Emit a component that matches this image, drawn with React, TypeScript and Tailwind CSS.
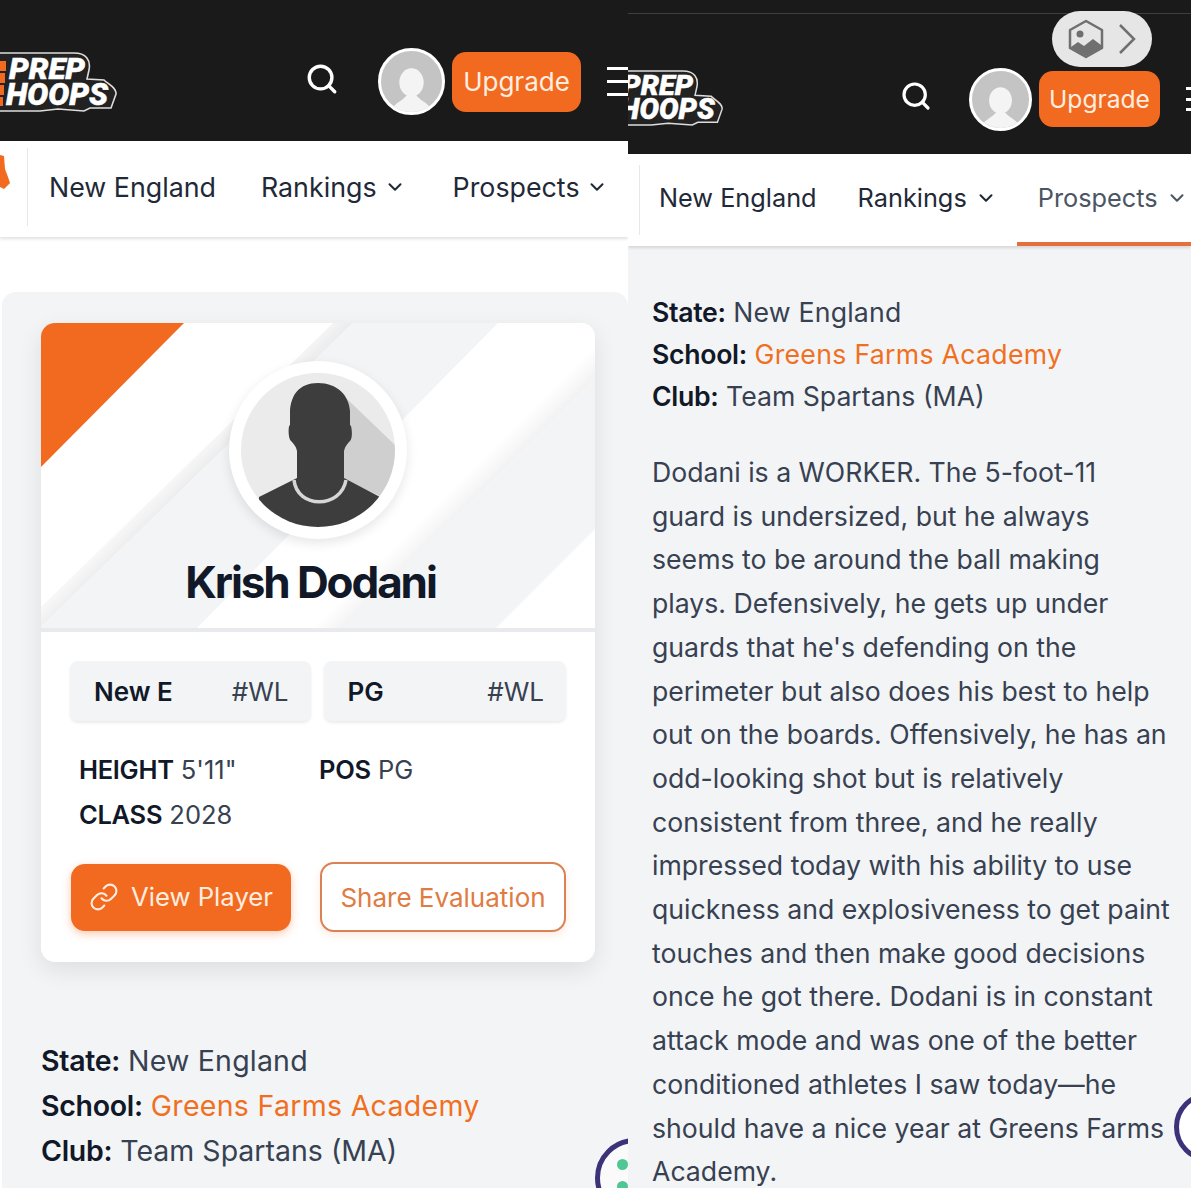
import { Search, ChevronDown, Link } from "lucide-react";

const font = { fontFamily: "Inter, 'Liberation Sans', sans-serif" };

function Logo({ className }: { className: string }) {
  return (
    <svg viewBox="0 0 117 60" className={className}>
      <path
        d="M-6 1 L74 1 C86 1 91 8 89 18 L87 27 L104 28 C108 32 117 36 116 42 L111 56 L90 56 L84 59 L58 57 L40 59 L-6 59 Z"
        fill="#222"
        stroke="#ddd"
        strokeWidth="1.6"
      />
      <rect x="0" y="9" width="6" height="10" fill="#f26a1f" />
      <rect x="0" y="21" width="5" height="10" fill="#f26a1f" />
      <rect x="0" y="33" width="4" height="10" fill="#f26a1f" />
      <rect x="0" y="45" width="3" height="9" fill="#f26a1f" />
      <text x="9" y="27" fontFamily="Roboto, Inter, sans-serif" fontWeight="900" fontStyle="italic" fontSize="30" fill="#fff" stroke="#fff" strokeWidth="0.5" textLength="76" lengthAdjust="spacingAndGlyphs">PREP</text>
      <text x="6" y="53" fontFamily="Roboto, Inter, sans-serif" fontWeight="900" fontStyle="italic" fontSize="31" fill="#fff" stroke="#fff" strokeWidth="0.5" textLength="102" lengthAdjust="spacingAndGlyphs">HOOPS</text>
    </svg>
  );
}

function SmallAvatar({ className, ring }: { className: string; ring: string }) {
  return (
    <div className={`${className} ${ring} shrink-0 rounded-full border-white bg-[#c4c4c4] overflow-hidden`}>
      <svg viewBox="0 0 60 60" className="w-full h-full">
        <ellipse cx="30" cy="31" rx="12" ry="14" fill="#f4f4f4" />
        <path d="M10 60 C11 52 20 50 25 44 L35 44 C40 50 49 52 50 60 Z" fill="#f4f4f4" />
      </svg>
    </div>
  );
}

function Hamburger({ className }: { className: string }) {
  return (
    <div className={`${className} flex flex-col justify-between shrink-0`}>
      <div className="h-[3px] bg-white" />
      <div className="h-[3px] bg-white" />
      <div className="h-[3px] bg-white" />
    </div>
  );
}

function Info({ className }: { className: string }) {
  return (
    <div className={className}>
      <p><b className="font-semibold text-[#111827] tracking-[-0.3px]">State:</b> <span className="tracking-[0.2px]">New England</span></p>
      <p><b className="font-semibold text-[#111827] tracking-[-0.3px]">School:</b> <span className="text-[#f0701f] tracking-[0.3px]">Greens Farms Academy</span></p>
      <p><b className="font-semibold text-[#111827] tracking-[-0.3px]">Club:</b> Team Spartans (MA)</p>
    </div>
  );
}

function CardHeader() {
  return (
    <div className="relative h-[305px] overflow-hidden bg-white flex flex-col items-center">
      <svg viewBox="0 0 554 305" className="absolute inset-0 w-[554px] h-[305px]">
        <defs>
          <linearGradient id="sh1" gradientUnits="userSpaceOnUse" x1="156" y1="152" x2="136" y2="132">
            <stop offset="0" stopColor="#000" stopOpacity="0.07" />
            <stop offset="1" stopColor="#000" stopOpacity="0" />
          </linearGradient>
          <linearGradient id="sh2" gradientUnits="userSpaceOnUse" x1="428" y1="180" x2="412" y2="164">
            <stop offset="0" stopColor="#000" stopOpacity="0.05" />
            <stop offset="1" stopColor="#000" stopOpacity="0" />
          </linearGradient>
        </defs>
        <polygon points="312,0 292,0 0,284 0,304" fill="url(#sh1)" />
        <polygon points="554,56 554,24 272,305 304,305" fill="url(#sh2)" />
        <polygon points="312,0 457,0 156,305 0,305 0,304" fill="#f3f4f6" />
        <polygon points="554,56 554,206 455,305 304,305" fill="#f3f4f6" />
        <polygon points="0,0 143,0 0,144" fill="#f26a1f" />
      </svg>
      <div className="relative mt-[38px] w-[178px] h-[178px] rounded-full bg-white p-3 shadow-[0_4px_12px_rgba(0,0,0,0.1)]">
        <svg viewBox="0 0 154 154" className="w-full h-full">
          <defs>
            <clipPath id="cc"><circle cx="77" cy="77" r="77" /></clipPath>
          </defs>
          <g clipPath="url(#cc)">
            <rect width="154" height="154" fill="#ebebeb" />
            <polygon points="105,25 154,72 154,130 100,105" fill="#cfcfcf" />
            <path
              d="M77 10 C58 10 50 22 49 38 L49 52 C47 52 47 66 50 68 C52 70 55 73 56 78 L56 105 L18 124 L18 154 L139 154 L139 124 L103 105 L103 78 C104 73 107 70 109 68 C112 66 111 52 109 52 L109 38 C108 22 96 10 77 10 Z"
              fill="#3d3d3d"
            />
            <path d="M53 107 C56 136 100 136 105 107" fill="none" stroke="#d6d6d6" strokeWidth="3.5" />
          </g>
        </svg>
      </div>
      <h1 className="relative mt-[19px] mr-[15px] text-[44px] leading-[48px] font-bold tracking-[-2.1px] text-[#111827]">Krish Dodani</h1>
    </div>
  );
}

function Chip({ name, className }: { name: string; className: string }) {
  return (
    <div className={`${className} h-[60px] rounded-[8px] bg-[#f3f4f6] shadow-[0_2px_3px_rgba(0,0,0,0.08)] flex items-center justify-between pl-6 pr-[22px] text-[26px]`}>
      <span className="font-semibold text-[#111827]">{name}</span>
      <span className="text-[#374151]">#WL</span>
    </div>
  );
}

export default function App() {
  return (
    <div style={font} className="w-[1200px] h-[1188px] overflow-hidden bg-white flex">
      {/* Left screenshot */}
      <div className="relative w-[628px] h-[1188px] overflow-hidden flex flex-col shrink-0">
        <header className="h-[141px] bg-[#1a1a1a] flex items-center pt-[22px] overflow-hidden shrink-0">
          <Logo className="w-[117px] h-[60px] shrink-0" />
          <Search className="ml-[188px] mb-[6px] shrink-0 text-white" size={34} strokeWidth={2.4} />
          <SmallAvatar className="ml-[39px] w-[67px] h-[67px]" ring="border-[3px]" />
          <button className="ml-[7px] w-[129px] h-[60px] rounded-[14px] bg-[#f26a1f] text-[#ffeee0] text-[26px] shrink-0">Upgrade</button>
          <Hamburger className="ml-[26px] w-[21px] h-[29px]" />
        </header>
        <nav className="relative h-[96px] bg-white shadow-[0_2px_3px_rgba(0,0,0,0.12)] flex items-center text-[26.8px] text-[#1f2937] shrink-0">
          <svg viewBox="0 0 10 34" className="w-[10px] h-[34px] mb-[34px] shrink-0">
            <path d="M0 0 L4 1 L5 14 L8 22 L10 28 L4 34 L0 32 Z" fill="#f26a1f" />
          </svg>
          <div className="ml-[17px] w-px h-[78px] bg-[#e5e7eb] mb-1 shrink-0" />
          <span className="ml-[21px] pb-1 whitespace-nowrap">New England</span>
          <span className="ml-[45px] pb-1 whitespace-nowrap">Rankings</span>
          <ChevronDown className="ml-[7px] mb-1 shrink-0" size={22} strokeWidth={2.2} />
          <span className="ml-[47px] pb-1 whitespace-nowrap">Prospects</span>
          <ChevronDown className="ml-[6px] mb-1 shrink-0" size={22} strokeWidth={2.2} />
        </nav>
        <div className="mt-[55px] ml-[2px] flex-1 rounded-t-[14px] bg-[#f3f4f6] pt-[31px] pl-[39px]">
          <div className="w-[554px] h-[639px] rounded-[14px] bg-white overflow-hidden shadow-[0_8px_24px_rgba(0,0,0,0.09)]">
            <CardHeader />
            <div className="border-t-4 border-[#e9eaee] px-[29px] pt-[29px]">
              <div className="flex gap-[13px]">
                <Chip name="New E" className="w-[241px]" />
                <Chip name="PG" className="w-[243px]" />
              </div>
              <div className="mt-[29px] ml-[9px] grid grid-cols-[240px_1fr] gap-y-[6px] text-[25.5px] leading-[39px] text-[#374151]">
                <p><b className="font-semibold text-[#111827] tracking-[-0.3px]">HEIGHT</b> 5'11"</p>
                <p><b className="font-semibold text-[#111827] tracking-[-0.3px]">POS</b> PG</p>
                <p><b className="font-semibold text-[#111827] tracking-[-0.3px]">CLASS</b> 2028</p>
              </div>
              <div className="mt-[28px] flex items-center">
                <button className="ml-px w-[220px] h-[67px] rounded-[14px] bg-[#f26a1f] text-[#ffeee0] text-[25.7px] flex items-center justify-center gap-[12px] shadow-[0_3px_8px_rgba(245,106,31,0.35)]">
                  <Link size={30} strokeWidth={1.7} />
                  View Player
                </button>
                <button className="ml-[29px] w-[246px] h-[70px] rounded-[14px] border-2 border-[#d98255] bg-white text-[#e07b42] text-[26px] whitespace-nowrap shadow-[0_3px_8px_rgba(245,106,31,0.15)]">
                  Share Evaluation
                </button>
              </div>
            </div>
          </div>
          <Info className="mt-[76px] text-[28.5px] leading-[45px] text-[#374151] whitespace-nowrap" />
        </div>
        <div className="absolute left-[595px] top-[1138px] w-[80px] h-[80px] rounded-full border-[5px] border-[#3b3279] bg-[#fafafa]">
          <div className="absolute left-[17px] top-[16px] w-[11px] h-[11px] rounded-full bg-[#4fc795]" />
          <div className="absolute left-[17px] top-[38px] w-[11px] h-[11px] rounded-full bg-[#4fc795]" />
        </div>
      </div>

      {/* Right screenshot */}
      <div className="relative w-[563px] h-[1188px] overflow-hidden flex flex-col shrink-0">
        <header className="relative h-[154px] bg-[#1a1a1a] flex items-center pt-[44px] overflow-hidden shrink-0">
          <div className="absolute left-0 right-0 top-[13px] h-px bg-[#3f3f3f]" />
          <div className="absolute left-[424px] top-[11px] w-[100px] h-[56px] rounded-full bg-[#e6e6e6] flex items-center justify-center gap-[14px]">
            <svg viewBox="0 0 36 40" className="w-[36px] h-[40px]">
              <path d="M18 2 L34 11 L34 29 L18 38 L2 29 L2 11 Z" fill="none" stroke="#6f6f6f" strokeWidth="2.5" strokeLinejoin="round" />
              <circle cx="12" cy="15" r="3.5" fill="#6f6f6f" />
              <path d="M3 28 L10 23 L16 27 L25 20 L33 26 L33 29 L18 37 L3 29 Z" fill="#6f6f6f" />
            </svg>
            <svg viewBox="0 0 18 32" className="w-[18px] h-[32px]">
              <path d="M2 2 L16 16 L2 30" fill="none" stroke="#6f6f6f" strokeWidth="2.5" />
            </svg>
          </div>
          <Logo className="-ml-[14px] mb-[2px] w-[109px] h-[56px] shrink-0" />
          <Search className="ml-[177px] mb-[6px] shrink-0 text-white" size={32} strokeWidth={2.4} />
          <SmallAvatar className="ml-[37px] w-[63px] h-[63px]" ring="border-[3px]" />
          <button className="ml-[7px] w-[121px] h-[56px] rounded-[14px] bg-[#f26a1f] text-[#ffeee0] text-[24.6px] shrink-0">Upgrade</button>
          <Hamburger className="ml-[26px] w-[21px] h-[24px]" />
        </header>
        <nav className="relative h-[92px] bg-white shadow-[0_2px_3px_rgba(0,0,0,0.12)] flex items-center text-[25.3px] text-[#1f2937] shrink-0">
          <div className="ml-[11px] w-px h-[70px] bg-[#e5e7eb] shrink-0" />
          <span className="ml-[19px] pb-1 whitespace-nowrap">New England</span>
          <span className="ml-[41px] pb-1 whitespace-nowrap">Rankings</span>
          <ChevronDown className="ml-[8px] mb-1 shrink-0" size={22} strokeWidth={2.2} />
          <div className="ml-[20px] pl-[21px] self-stretch flex items-center border-b-4 border-[#e5703c] flex-1 text-[#4b5563]">
            <span className="whitespace-nowrap">Prospects</span>
            <ChevronDown className="ml-[8px] shrink-0" size={22} strokeWidth={2.2} />
          </div>
        </nav>
        <div className="flex-1 bg-[#f3f4f6] pl-[24px] pt-[45px] text-[26.65px] text-[#374151]">
          <Info className="leading-[42px] whitespace-nowrap" />
          <p className="mt-[34px] w-[530px] leading-[43.7px] whitespace-pre-line">
            {`Dodani is a WORKER. The 5-foot-11
guard is undersized, but he always
seems to be around the ball making
plays. Defensively, he gets up under
guards that he's defending on the
perimeter but also does his best to help
out on the boards. Offensively, he has an
odd-looking shot but is relatively
consistent from three, and he really
impressed today with his ability to use
quickness and explosiveness to get paint
touches and then make good decisions
once he got there. Dodani is in constant
attack mode and was one of the better
conditioned athletes I saw today—he
should have a nice year at Greens Farms
Academy.`}
          </p>
        </div>
        <div className="absolute left-[546px] top-[1092px] w-[70px] h-[70px] rounded-full border-[5px] border-[#3b3279] bg-white" />
      </div>
    </div>
  );
}
